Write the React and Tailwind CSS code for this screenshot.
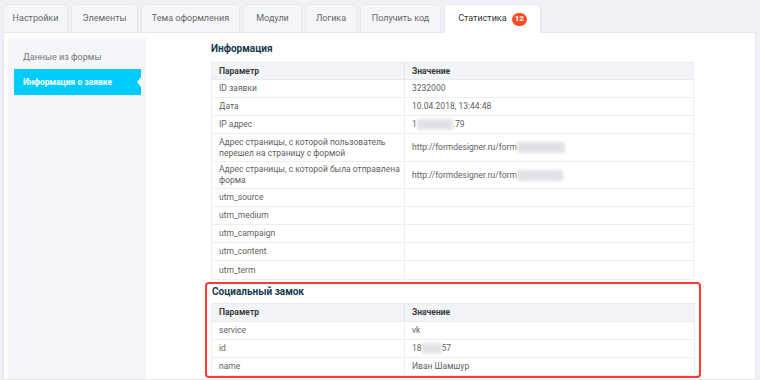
import React from "react";

const Blur = ({ w }) => (
  <span
    className="inline-block h-[11px] align-middle bg-[#e1e2e5] blur-[1.5px] rounded-[2px]"
    style={{ width: w }}
  />
);

function Table({ rows, headH = 18 }) {
  return (
    <div className="border-x border-[#eceef2]">
      <div
        className="flex bg-[#f3f4f8] border-y border-[#e8eaef] items-center font-bold text-[#3a3a3a]"
        style={{ height: headH }}
      >
        <div className="w-[193px] pl-[7px] border-r border-[#e3e5ea] h-full flex items-center">Параметр</div>
        <div className="flex-1 pl-[7px] h-full flex items-center">Значение</div>
      </div>
      {rows.map((r, i) => (
        <div
          key={i}
          className="flex border-b border-[#eceef1] items-stretch text-[#5f5f5f]"
          style={{ height: r.h || 18 }}
        >
          <div className="w-[193px] pl-[7px] border-r border-[#eceef1] flex items-center leading-[11px] whitespace-nowrap">
            {r.p}
          </div>
          <div className="flex-1 pl-[7px] flex items-center">{r.v}</div>
        </div>
      ))}
    </div>
  );
}

export default function App() {
  const tabs = [
    ["Настройки", 65],
    ["Элементы", 67],
    ["Тема оформления", 99],
    ["Модули", 59],
    ["Логика", 52],
    ["Получить код", 81],
  ];
  const info = [
    { p: "ID заявки", v: "3232000" },
    { p: "Дата", v: "10.04.2018, 13:44:48" },
    {
      p: "IP адрес",
      v: (
        <span className="flex items-center">
          1<Blur w={36} />
          .79
        </span>
      ),
    },
    {
      p: (
        <span>
          Адрес страницы, с которой пользователь
          <br />
          перешел на страницу с формой
        </span>
      ),
      v: (
        <span className="flex items-center">
          http://formdesigner.ru/form<Blur w={48} />
        </span>
      ),
      h: 28,
    },
    {
      p: (
        <span>
          Адрес страницы, с которой была отправлена
          <br />
          форма
        </span>
      ),
      v: (
        <span className="flex items-center">
          http://formdesigner.ru/form<Blur w={46} />
        </span>
      ),
      h: 27,
    },
    { p: "utm_source", v: "" },
    { p: "utm_medium", v: "" },
    { p: "utm_campaign", v: "" },
    { p: "utm_content", v: "" },
    { p: "utm_term", v: "", h: 19 },
  ];
  const social = [
    { p: "service", v: "vk" },
    {
      p: "id",
      v: (
        <span className="flex items-center">
          18<Blur w={20} />
          57
        </span>
      ),
    },
    { p: "name", v: "Иван Шамшур" },
  ];
  return (
    <div
      className="w-[760px] h-[380px] overflow-hidden bg-[#eff1f6] text-[8.5px]"
      style={{ fontFamily: "Roboto, 'Noto Sans', sans-serif" }}
    >
      <div className="flex items-end h-[32px] pl-[3px] gap-[3px]">
        {tabs.map(([t, w]) => (
          <div
            key={t}
            className="h-[28px] rounded-t-[5px] border border-b-0 border-[#e6e8ee] bg-[#f5f6fa] flex items-center justify-center text-[#666] text-[9px]"
            style={{ width: w }}
          >
            {t}
          </div>
        ))}
        <div className="h-[29px] w-[97px] rounded-t-[5px] border border-b-0 border-[#e6e8ee] bg-white flex items-center justify-center gap-[5px] text-[#333] text-[9px] -mb-px relative z-10">
          Статистика
          <span className="h-[13px] min-w-[15px] px-[3px] rounded-full bg-[#ff4b1f] text-white text-[8px] font-bold flex items-center justify-center">
            12
          </span>
        </div>
      </div>
      <div className="ml-[3px] mr-[4px] h-[348px] bg-white border border-[#e6e8ee] flex pt-[5px] pl-[4px]">
        <div className="w-[138px] bg-[#f4f5f9] shrink-0 pt-[5px]">
          <div className="h-[26px] pl-[15px] pt-[3px] flex items-center text-[#777] text-[9px]">Данные из формы</div>
          <div className="h-[26px] ml-[6px] mr-[5px] bg-[#00cbff] text-white font-bold text-[8.5px] flex items-center pl-[9px] relative">
            Информация о заявке
            <span className="absolute right-0 top-[8px] w-0 h-0 border-y-[5px] border-y-transparent border-r-[4px] border-r-[#f4f5f9]" />
          </div>
        </div>
        <div className="ml-[65px] w-[483px]">
          <div className="h-[24px] pb-[3px] flex items-center text-[10px] font-bold text-[#153a4d]">Информация</div>
          <Table rows={info} />
          <div className="-ml-[6px] -mr-[7px] mt-[2px] border-2 border-[#ff3838] rounded-[4px] px-[4px]">
            <div className="h-[19px] flex items-center pb-[5px] pl-[1px] text-[10px] font-bold text-[#153a4d]">Социальный замок</div>
            <Table rows={social} headH={19} />
          </div>
        </div>
      </div>
    </div>
  );
}
